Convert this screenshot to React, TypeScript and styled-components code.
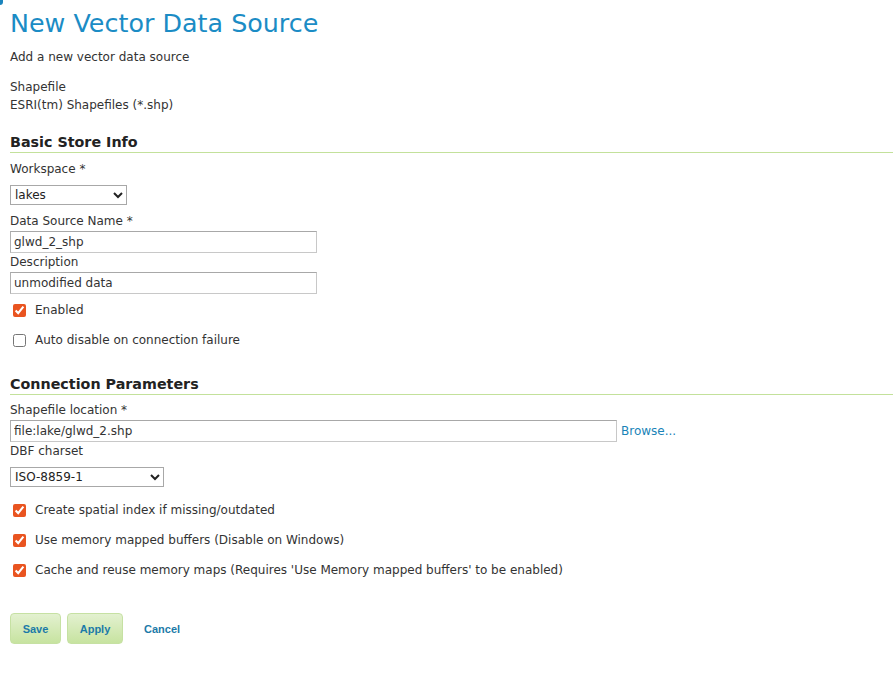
import React from "react";
import styled, { createGlobalStyle } from "styled-components";

const Global = createGlobalStyle`
  html, body { margin: 0; padding: 0; background: #fff; }
  body { font-family: "DejaVu Sans", Verdana, sans-serif; font-size: 12px; color: #333; }
`;

const Page = styled.div`
  position: relative;
  padding: 0 0 0 10px;
  overflow: hidden;
`;

const Corner = styled.div`
  position: absolute;
  left: 0;
  top: 0;
  width: 3px;
  height: 5px;
  background: #1b84bd;
  border-bottom-right-radius: 3px;
`;

const Title = styled.h1`
  margin: 0;
  font-size: 25.4px;
  font-weight: normal;
  line-height: 47px;
  color: #1b8cc5;
`;

const Text = styled.p<{ $mt?: number }>`
  margin: ${(p) => p.$mt ?? 0}px 0 0;
  line-height: 18px;
`;

const Section = styled.h2<{ $mt: number }>`
  margin: ${(p) => p.$mt}px 0 0;
  padding-top: 2px;
  font-size: 14.3px;
  font-weight: bold;
  line-height: 20px;
  color: #222;
  border-bottom: 1px solid #c3e19b;
`;

const Label = styled.label<{ $mt: number }>`
  display: block;
  margin-top: ${(p) => p.$mt}px;
  line-height: 19px;
`;

const Select = styled.select<{ $w: number; $mt: number }>`
  display: block;
  margin-top: ${(p) => p.$mt}px;
  width: ${(p) => p.$w}px;
  height: 20px;
  font-family: "DejaVu Sans", Verdana, sans-serif;
  font-size: 12px;
  color: #222;
  background: #fff;
  border: 1px solid #a8a8a8;
  border-radius: 0;
  padding: 0;
`;

const Input = styled.input<{ $w: number }>`
  display: block;
  box-sizing: border-box;
  margin: 0;
  width: ${(p) => p.$w}px;
  height: 22px;
  padding: 1px 3px;
  font-family: "DejaVu Sans", Verdana, sans-serif;
  font-size: 12px;
  color: #333;
  border: 1px solid #c8c8c8;
  border-top-color: #a8a8a8;
  border-left-color: #b0b0b0;
  outline: none;
`;

const InputRow = styled.div`
  display: flex;
  align-items: center;
  gap: 4px;
`;

const Link = styled.a`
  color: #1a84b8;
  text-decoration: none;
  cursor: pointer;
`;

const CheckList = styled.div<{ $mt: number }>`
  margin-top: ${(p) => p.$mt}px;
`;

const CheckRow = styled.label`
  display: flex;
  align-items: center;
  height: 30px;
  input {
    margin: 0 9px 0 3px;
    width: 13px;
    height: 13px;
    accent-color: #e95420;
  }
`;

const Buttons = styled.div`
  display: flex;
  align-items: center;
  gap: 6px;
  margin-top: 28px;
`;

const Button = styled.button<{ $w: number }>`
  width: ${(p) => p.$w}px;
  height: 31px;
  border: 1px solid #c6e1a3;
  border-radius: 4px;
  background: linear-gradient(#e3f1d0, #c7e3a0);
  color: #1c7aa8;
  font-family: "Liberation Sans", Arial, sans-serif;
  font-size: 11px;
  font-weight: bold;
  cursor: pointer;
`;

const TextButton = styled.a`
  margin-left: 15px;
  color: #1c7aa8;
  font-family: "Liberation Sans", Arial, sans-serif;
  font-size: 11px;
  font-weight: bold;
`;

export default function App() {
  return (
    <>
      <Global />
      <Page>
        <Corner />
        <Title>New Vector Data Source</Title>
        <Text $mt={1}>Add a new vector data source</Text>
        <Text $mt={12}>Shapefile</Text>
        <Text>ESRI(tm) Shapefiles (*.shp)</Text>

        <Section $mt={16}>Basic Store Info</Section>
        <Label $mt={7}>Workspace *</Label>
        <Select $w={117} $mt={6} defaultValue="lakes">
          <option value="lakes">lakes</option>
        </Select>
        <Label $mt={7}>Data Source Name *</Label>
        <Input $w={307} defaultValue="glwd_2_shp" />
        <Label $mt={0}>Description</Label>
        <Input $w={307} defaultValue="unmodified data" />
        <CheckList $mt={1}>
          <CheckRow>
            <input type="checkbox" defaultChecked />
            Enabled
          </CheckRow>
          <CheckRow>
            <input type="checkbox" />
            Auto disable on connection failure
          </CheckRow>
        </CheckList>

        <Section $mt={17}>Connection Parameters</Section>
        <Label $mt={6}>Shapefile location *</Label>
        <InputRow>
          <Input $w={607} defaultValue="file:lake/glwd_2.shp" />
          <Link>Browse...</Link>
        </InputRow>
        <Label $mt={0}>DBF charset</Label>
        <Select $w={154} $mt={6} defaultValue="ISO-8859-1">
          <option value="ISO-8859-1">ISO-8859-1</option>
        </Select>
        <CheckList $mt={8}>
          <CheckRow>
            <input type="checkbox" defaultChecked />
            Create spatial index if missing/outdated
          </CheckRow>
          <CheckRow>
            <input type="checkbox" defaultChecked />
            Use memory mapped buffers (Disable on Windows)
          </CheckRow>
          <CheckRow>
            <input type="checkbox" defaultChecked />
            Cache and reuse memory maps (Requires 'Use Memory mapped buffers' to be enabled)
          </CheckRow>
        </CheckList>

        <Buttons>
          <Button $w={51}>Save</Button>
          <Button $w={56}>Apply</Button>
          <TextButton>Cancel</TextButton>
        </Buttons>
      </Page>
    </>
  );
}
